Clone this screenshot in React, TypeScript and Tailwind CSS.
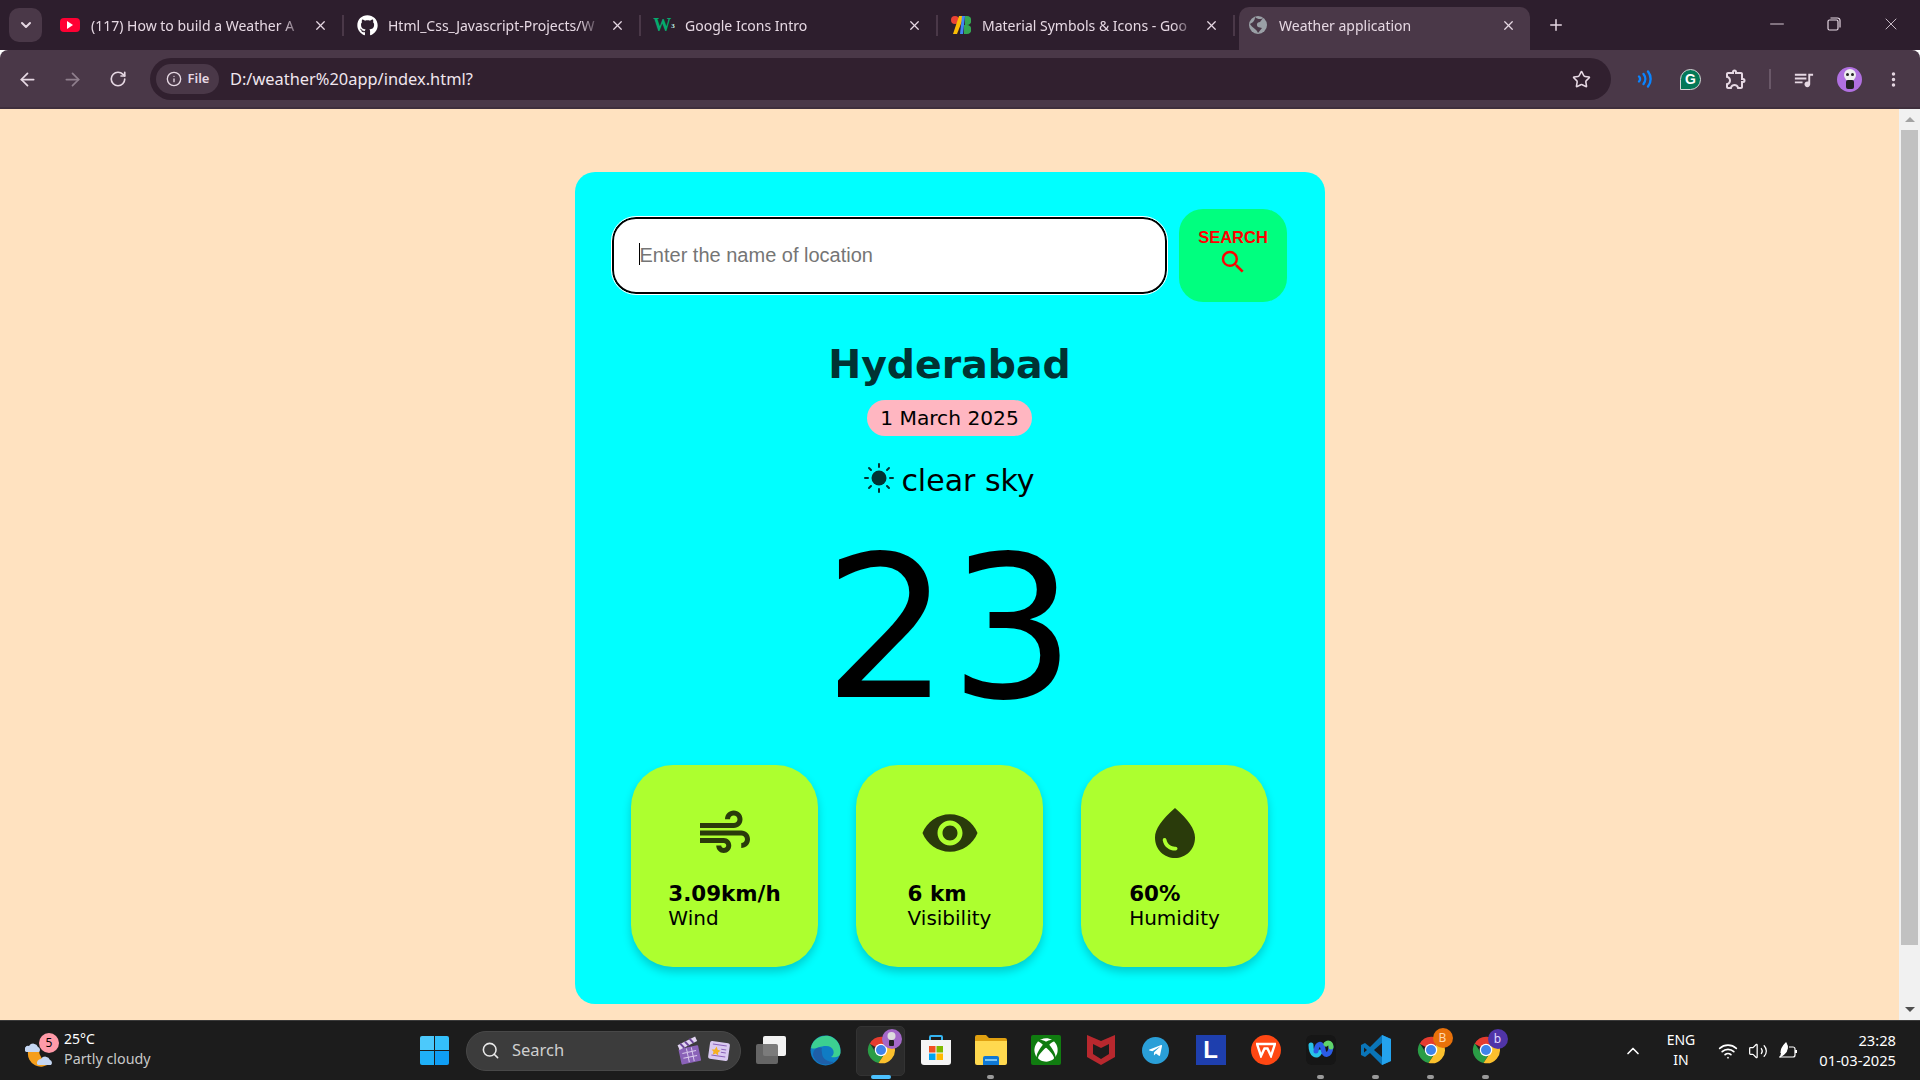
import React from "react";
import { ArrowLeft, ArrowRight, RotateCw, Info, Star, X, Plus, Minus, ChevronDown, ChevronUp, Search, Wifi, Volume2, EllipsisVertical } from "lucide-react";
import { MdAir, MdVisibility, MdWaterDrop, MdSearch, MdOutlineExtension, MdQueueMusic } from "react-icons/md";
import { FaGithub, FaXbox, FaTelegramPlane } from "react-icons/fa";

const uiFont = "font-['Noto_Sans',sans-serif]";

function ChromeLogo({ size = 30 }: { size?: number }) {
  return (
    <svg width={size} height={size} viewBox="0 0 48 48">
      <path d="M24 24 L6 14 A21 21 0 0 1 44 16 L24 16 Z" fill="#e53c2f" />
      <path d="M6 13 A21 21 0 0 0 20 44.6 L31 27 L24 32 L15 27 Z" fill="#2a9d46" />
      <path d="M44.5 16 A21 21 0 0 1 20 44.6 L31 28 L32 16 Z" fill="#fbc02d" />
      <circle cx="24" cy="24" r="10" fill="#fff" />
      <circle cx="24" cy="24" r="8" fill="#3f83ea" />
    </svg>
  );
}

function Tab({ icon, title, active }: { icon: React.ReactNode; title: string; active?: boolean }) {
  return (
    <div className="relative flex items-center w-[297px] h-[43px] shrink-0 pl-[15px] pb-[7px]">
      {active && <div className="absolute top-0 bottom-0 left-[4px] right-[2px] bg-[#4a3848] rounded-t-[10px]" />}
      <div className="relative w-[16px] h-[20px] flex items-center justify-center shrink-0">{icon}</div>
      <div className="relative ml-[13px] w-[213px] shrink-0 overflow-hidden whitespace-nowrap text-[14px] text-[#e6d8e3] [mask-image:linear-gradient(to_right,black_90%,transparent)]">{title}</div>
      <X size={15} strokeWidth={2} className="relative ml-[9px] shrink-0 text-[#e6d8e3]" />
      {!active && <div className="absolute right-0 top-[8px] h-[21px] w-[2px] bg-[#4a3848]" />}
    </div>
  );
}

function TbIcon({ children, dot, active }: { children: React.ReactNode; dot?: boolean; active?: boolean }) {
  return (
    <div className="relative w-[55px] h-[60px] shrink-0 flex items-center justify-center">
      {active && <div className="absolute left-[3px] right-[3px] top-[5px] bottom-[5px] bg-[#2b2b2b] rounded-[5px] border border-[#333333]" />}
      <div className="relative flex items-center justify-center -mt-[1px]">{children}</div>
      {dot && <div className="absolute bottom-[2px] left-[24px] w-[7px] h-[4px] rounded-full bg-[#9a9a9a]" />}
      {active && <div className="absolute bottom-[2px] left-[18px] w-[20px] h-[4px] rounded-full bg-[#4cc2ff]" />}
    </div>
  );
}

function Badge({ text, className }: { text: string; className: string }) {
  return <div className={`absolute -top-[6px] -right-[7px] w-[20px] h-[20px] rounded-full flex items-center justify-center text-[12px] ${className}`}>{text}</div>;
}

function Stat({ icon, value, label }: { icon: React.ReactNode; value: string; label: string }) {
  return (
    <div className="w-[187px] h-[202px] bg-[#adff2f] rounded-[42px] shadow-[0_5px_10px_rgba(0,0,0,0.2)] flex flex-col items-center pt-[38px]">
      <div className="h-[60px] text-[#2a3b0b]">{icon}</div>
      <div className="mt-[19px] text-left text-black font-['DejaVu_Sans',sans-serif]">
        <div className="font-bold text-[21.400px] leading-[24px]">{value}</div>
        <div className="text-[20px] leading-[24px]">{label}</div>
      </div>
    </div>
  );
}

export default function App() {
  return (
    <div className={`w-screen h-screen overflow-hidden flex flex-col ${uiFont}`}>
      {/* tab strip */}
      <div className="h-[50px] shrink-0 bg-[#2d1e2d] flex items-end relative">
        <div className="w-[47px] h-[50px] shrink-0 flex items-center justify-center pl-[4px]">
          <div className="w-[33px] h-[34px] rounded-[10px] bg-[#4a3848] flex items-center justify-center">
            <ChevronDown size={16} strokeWidth={3} className="text-[#e6d8e3]" />
          </div>
        </div>
        <Tab title="(117) How to build a Weather A" icon={<div className="w-[20px] h-[14px] shrink-0 bg-[#ff0033] rounded-[4px] flex items-center justify-center"><div className="w-0 h-0 border-y-[4px] border-y-transparent border-l-[6px] border-l-white" /></div>} />
        <Tab title="Html_Css_Javascript-Projects/W" icon={<FaGithub size={21} className="text-white shrink-0" />} />
        <Tab title="Google Icons Intro" icon={<span className="text-[#04aa6d] font-bold text-[18px] leading-none font-['Liberation_Serif',serif] whitespace-nowrap">W<sup className="text-[7px] text-[#cfe]">3</sup></span>} />
        <Tab title="Material Symbols & Icons - Goo" icon={
          <svg width="20" height="18" viewBox="0 0 20 18" className="shrink-0"><circle cx="4" cy="4" r="4" fill="#ea4335" /><path d="M8 0h5L6 18H2Z" fill="#fbbc04" /><path d="M11 0h3l-2 18H9Z" fill="#4285f4" /><path d="M14 0h2a4 4 0 0 1 0 9h-2Z" fill="#34a853" /><path d="M13 9h3a4.500 4.500 0 0 1 0 9h-3Z" fill="#34a853" /></svg>} />
        <Tab active title="Weather application" icon={
          <svg width="18" height="18" viewBox="0 0 18 18" className="shrink-0"><circle cx="9" cy="9" r="9" fill="#9aa0a6" /><path d="M6 1 C9 4 13 3 14 2 L11 6 C8 6 7 9 9 11 L13 12 L9 17 C8 13 3 12 1 8 C3 7 6 5 6 1Z" fill="#4a3848" /></svg>} />
        <div className="w-[43px] h-[43px] flex items-center justify-center pl-[5px] pb-[7px] shrink-0"><Plus size={18} strokeWidth={2} className="text-[#e6d8e3]" /></div>
        <div className="flex-1" />
        <div className="flex h-[50px] items-center pr-[18px] gap-[39px] text-[#e6d8e3] -translate-y-[1px]">
          <Minus size={22} strokeWidth={1} />
          <svg width="14" height="14" viewBox="0 0 14 14" fill="none" stroke="currentColor" strokeWidth="1.200"><rect x="1" y="3" width="10" height="10" rx="1.500" /><path d="M3.500 1h7a2.500 2.500 0 0 1 2.500 2.500v7" /></svg>
          <div className="w-[22px] flex justify-center"><X size={20} strokeWidth={1} /></div>
        </div>
      </div>

      {/* toolbar */}
      <div className="h-[59px] shrink-0 bg-[#4a3848] rounded-t-[8px] flex items-center border-b-[2px] border-b-[#3f2f3d] text-[#e6d8e3] pt-[1px]">
        <div className="w-[150px] shrink-0 flex items-center pl-[17px] gap-[24px]">
          <ArrowLeft size={21} strokeWidth={2} />
          <ArrowRight size={21} strokeWidth={2} className="text-[#8f7f8d]" />
          <RotateCw size={18} strokeWidth={2.200} className="ml-[2px]" />
        </div>
        <div className="w-[1461px] h-[42px] rounded-full bg-[#31202f] flex items-center pl-[6px] pr-[20px] shrink-0">
          <div className="w-[63px] h-[30px] rounded-full bg-[#4a3848] flex items-center justify-center gap-[6px]">
            <Info size={16} strokeWidth={2} />
            <span className="text-[13px] font-semibold">File</span>
          </div>
          <span className="ml-[11px] text-[16.400px] text-[#f0e6ee]">D:/weather%20app/index.html?</span>
          <div className="flex-1" />
          <Star size={19} strokeWidth={2} />
        </div>
        <div className="flex items-center flex-1">
          <svg width="20" height="22" viewBox="0 0 20 22" fill="none" stroke="#0a84ff" strokeWidth="2.400" strokeLinecap="round" className="ml-[24px]"><path d="M4 8.500a3.500 3.500 0 0 1 0 5" /><path d="M8.500 6a8 8 0 0 1 0 10" /><path d="M13 3.500a12 12 0 0 1 0 15" /></svg>
          <div className="ml-[25px] w-[21px] h-[21px] rounded-full rounded-bl-[2px] bg-[#047857] border border-[#d7d7d7] flex items-center justify-center text-white text-[14px] font-bold leading-none font-['Liberation_Sans',sans-serif]">G</div>
          <MdOutlineExtension size={24} className="ml-[23px]" />
          <div className="ml-[21px] w-[2px] h-[20px] bg-[#6a5868]" />
          <MdQueueMusic size={23} className="ml-[21px]" />
          <div className="ml-[22px] w-[25px] h-[25px] rounded-full bg-[#b070e0] flex items-center justify-center">
            <svg width="14" height="20" viewBox="0 0 14 20"><circle cx="7" cy="6" r="6" fill="#eee" /><circle cx="4.500" cy="5.500" r="1.500" fill="#222" /><circle cx="9.500" cy="5.500" r="1.500" fill="#222" /><rect x="3" y="11" width="8" height="9" rx="2" fill="#222" /></svg>
          </div>
          <EllipsisVertical size={19} strokeWidth={2.400} className="ml-[22px]" />
        </div>
      </div>

      {/* page */}
      <div className="flex-1 min-h-0 flex">
        <div className="flex-1 min-w-0 bg-[#ffe2c0] flex justify-center items-start pt-[63px] overflow-hidden">
          <div className="w-[750px] shrink-0 bg-[#00ffff] rounded-[20px] pt-[37px] pb-[37px] flex flex-col items-center">
            <div className="w-full pl-[37px] pr-[38px] flex items-center justify-between">
              <div className="relative w-[555px] h-[77px] shrink-0 rounded-[24px] border-[2.5px] border-black bg-white outline outline-1 outline-white flex items-center pl-[26px] pb-[1px] font-['Liberation_Sans',sans-serif]">
                <input className="w-full text-[20px] outline-none bg-transparent placeholder:text-[#757575]" placeholder="Enter the name of location" />
                <div className="absolute left-[25px] top-[24px] h-[22px] w-px bg-black" />
              </div>
              <div className="w-[108px] h-[93px] shrink-0 rounded-[24px] bg-[#00ff7f] flex flex-col items-center pt-[19px] text-[#ff0000] font-['Liberation_Sans',sans-serif]">
                <span className="text-[16.500px] font-bold leading-[19px] pl-[1px]">SEARCH</span>
                <MdSearch size={30} />
              </div>
            </div>
            <div className="font-['DejaVu_Sans',sans-serif] flex flex-col items-center w-full">
              <div className="mt-[38px] h-[48px] text-[39.400px] leading-[48px] font-bold text-[#003333]">Hyderabad</div>
              <div className="mt-[12px] h-[36px] px-[13px] rounded-full bg-[#ffb6c1] text-[20.200px] leading-[37px] text-black">1 March 2025</div>
              <div className="mt-[27px] h-[36px] flex items-center text-[30px] leading-[36px] text-black">
                <svg width="30" height="30" viewBox="0 0 30 30" className="mr-[7px] -mt-[6px]" stroke="#003333" strokeWidth="2" strokeLinecap="round">
                  <circle cx="15" cy="15" r="7.500" fill="#003333" stroke="none" />
                  <path d="M15 1v3M15 26v3M1 15h3M26 15h3M5 5l2 2M23 23l2 2M5 25l2-2M23 7l2-2" />
                </svg>
                clear sky
              </div>
              <div className="mt-[30px] h-[200px] text-[198px] leading-[200px] text-black">23</div>
              <div className="mt-[36px] flex justify-center gap-[38px] w-full">
                <Stat icon={<MdAir size={60} />} value="3.09km/h" label="Wind" />
                <Stat icon={<MdVisibility size={60} />} value="6 km" label="Visibility" />
                <Stat icon={<MdWaterDrop size={60} />} value="60%" label="Humidity" />
              </div>
            </div>
          </div>
        </div>
        <div className="w-[21px] shrink-0 bg-[#f1f1f1] flex flex-col items-center">
          <div className="h-[21px] flex items-center justify-center"><div className="w-0 h-0 border-x-[5px] border-x-transparent border-b-[5px] border-b-[#a3a3a3]" /></div>
          <div className="w-[17px] h-[815px] bg-[#c1c1c1]" />
          <div className="flex-1" />
          <div className="h-[21px] flex items-center justify-center"><div className="w-0 h-0 border-x-[5px] border-x-transparent border-t-[5px] border-t-[#505050]" /></div>
        </div>
      </div>

      {/* taskbar */}
      <div className="h-[60px] shrink-0 bg-[#1c1c1c] border-t border-t-[#3a3a3a] flex items-center relative">
        <div className="w-[420px] shrink-0 flex items-center pl-[25px]">
          <div className="relative w-[32px] h-[34px] shrink-0">
            <svg width="32" height="34" viewBox="0 0 32 34">
              <path d="M3 18 A13 13 0 0 0 25 29 A13 13 0 0 1 14 15 Z" fill="#f59e1b" />
              <path d="M0 17 a3.500 3.500 0 0 1 4-5 a5 5 0 0 1 9 1 a3 3 0 0 1 1 5 H2 a2 2 0 0 1-2-1Z" fill="#c4d6f2" />
              <path d="M12 30 a4 4 0 0 1 4-5 a5 5 0 0 1 9 1 a3 3 0 0 1 1 5 H14 a2 2 0 0 1-2-1Z" fill="#c4d6f2" />
            </svg>
            <div className="absolute -top-[1px] left-[14px] w-[20px] h-[20px] rounded-full bg-[#ff9aa8] flex items-center justify-center text-[12px] text-black">5</div>
          </div>
          <div className="ml-[7px] flex flex-col -mt-[3px]">
            <span className="text-[14px] leading-[20px] text-white">25°C</span>
            <span className="text-[14.300px] leading-[20px] text-[#c8c8c8]">Partly cloudy</span>
          </div>
        </div>
        <div className="w-[29px] shrink-0 grid grid-cols-2 gap-[1px]">
          <div className="h-[14px] bg-[#4cc9fb] rounded-tl-[2px]" /><div className="h-[14px] bg-[#34c0fb] rounded-tr-[2px]" />
          <div className="h-[14px] bg-[#1fb0f8] rounded-bl-[2px]" /><div className="h-[14px] bg-[#0f9ef5] rounded-br-[2px]" />
        </div>
        <div className="ml-[17px] w-[275px] h-[40px] shrink-0 rounded-full bg-[#3c3c3c] border border-[#484848] flex items-center pl-[14px] pr-[10px]">
          <Search size={19} strokeWidth={2} className="text-[#e8e8e8]" />
          <span className="ml-[12px] text-[16.500px] text-[#cfcfcf]">Search</span>
          <div className="flex-1" />
          <svg width="26" height="28" viewBox="0 0 26 28" className="rotate-[-12deg]"><rect x="3" y="10" width="20" height="16" rx="1" fill="#8a62b8" /><path d="M3 6 L22 1 L23 6 L4 11 Z" fill="#e2d5f2" /><path d="M6 5l3 5M11 4l3 5M16 2l3 5" stroke="#6d479b" strokeWidth="2" /><path d="M6 15h14M6 20h14M11 11v14M16 11v14" stroke="#d8c8ec" /></svg>
          <svg width="22" height="22" viewBox="0 0 22 22" className="ml-[6px] rotate-[8deg]"><rect x="1" y="2" width="20" height="18" rx="2" fill="#d9c9f0" /><path d="M4 5h14M13 9h5M13 12h5M4 16h14" stroke="#8a62b8" /><path d="M8 7l1.500 3 3 .5-2.200 2 .5 3-2.800-1.500-2.800 1.500.5-3-2.200-2 3-.5z" fill="#f5b021" /></svg>
        </div>
        <div className="w-[2px] shrink-0" />
        <TbIcon>
          <div className="relative w-[30px] h-[28px]">
            <div className="absolute left-[7px] top-0 w-[23px] h-[20px] bg-[#f2f2f2] rounded-[2px]" />
            <div className="absolute left-0 top-[8px] w-[22px] h-[20px] bg-[#6e6e6e]/90 rounded-[2px]" />
          </div>
        </TbIcon>
        <TbIcon>
          <svg width="31" height="31" viewBox="0 0 31 31">
            <circle cx="15.500" cy="15.500" r="15" fill="#0f7cc4" />
            <path d="M1 13 C3 2 14 0 19 1 C27 3 31 10 30.500 18 C30 22 25 23 21 22 C26 19 24 11 16 11 C9 11 5 15 1 13Z" fill="#3ccf91" />
            <path d="M12 18 C12 24 18 27 24 27 C19 31 6 31 3 20 C3 14 8 11 12 13 C11 15 12 16 12 18Z" fill="#1e5fa8" />
          </svg>
        </TbIcon>
        <TbIcon active>
          <div className="relative"><ChromeLogo /><div className="absolute -top-[6px] -right-[6px] w-[20px] h-[20px] rounded-full bg-[#a468c8] flex items-center justify-center"><svg width="9" height="14" viewBox="0 0 9 14"><circle cx="4.500" cy="4" r="4" fill="#ddd" /><rect x="2" y="8" width="5" height="6" rx="1" fill="#222" /></svg></div></div>
        </TbIcon>
        <TbIcon>
          <svg width="30" height="32" viewBox="0 0 30 32">
            <path d="M9 7V3a1 1 0 0 1 1-1h10a1 1 0 0 1 1 1v4" fill="none" stroke="#35b4f0" strokeWidth="2" />
            <path d="M0 6h30v22a3 3 0 0 1-3 3H3a3 3 0 0 1-3-3Z" fill="#f5f5f5" />
            <rect x="8" y="12" width="6.500" height="6.500" fill="#f25022" /><rect x="15.500" y="12" width="6.500" height="6.500" fill="#7fba00" /><rect x="8" y="19.500" width="6.500" height="6.500" fill="#00a4ef" /><rect x="15.500" y="19.500" width="6.500" height="6.500" fill="#ffb900" />
          </svg>
        </TbIcon>
        <TbIcon dot>
          <svg width="32" height="30" viewBox="0 0 32 30">
            <path d="M0 2a2 2 0 0 1 2-2h9l3 3h16a2 2 0 0 1 2 2v3H0Z" fill="#e0a010" />
            <path d="M0 6h32v22a2 2 0 0 1-2 2H2a2 2 0 0 1-2-2Z" fill="#ffd94f" />
            <path d="M8 23a2 2 0 0 1 2-2h12a2 2 0 0 1 2 2v7H8Z" fill="#0f78d4" />
            <rect x="10" y="24" width="12" height="2" fill="#7cc5f5" />
          </svg>
        </TbIcon>
        <TbIcon>
          <div className="w-[30px] h-[30px] rounded-[2px] bg-[#107c10] flex items-center justify-center"><FaXbox size={24} className="text-white" /></div>
        </TbIcon>
        <TbIcon>
          <svg width="28" height="30" viewBox="0 0 28 30"><path fillRule="evenodd" d="M0 0 L14 6 L28 0 V22 L14 30 L0 22 Z M6 9 V19 L14 24 L22 19 V9 L14 13 Z" fill="#b8282e" /></svg>
        </TbIcon>
        <TbIcon>
          <div className="w-[27px] h-[27px] rounded-full bg-[#2a9fd8] flex items-center justify-center"><FaTelegramPlane size={15} className="text-white -ml-[1px]" /></div>
        </TbIcon>
        <TbIcon>
          <div className="w-[30px] h-[30px] bg-[#1e3fae] flex items-center justify-center text-white text-[24px] font-bold leading-none font-['Liberation_Sans',sans-serif]">L</div>
        </TbIcon>
        <TbIcon>
          <div className="w-[30px] h-[30px] rounded-full bg-[#ff4713] flex items-center justify-center">
            <svg width="20" height="16" viewBox="0 0 20 16" fill="none" stroke="#fff" strokeWidth="2.400"><path d="M1 2h18l-4 12-3.500-7.500h-3L5 14Z" /></svg>
          </div>
        </TbIcon>
        <TbIcon dot>
          <div className="w-[30px] h-[30px] rounded-[6px] bg-[#161616] flex items-center justify-center">
            <svg width="26" height="20" viewBox="0 0 26 20" fill="none" strokeWidth="5" strokeLinecap="round"><path d="M3 5 C3 15 9 18 12 12" stroke="#27c4e8" /><path d="M8 11 C9 3 14 2 15 9 C16 17 22 16 23 7" stroke="#2b5ce6" /><path d="M18 4 C20 2 23 3 23 7" stroke="#5fd46a" /></svg>
          </div>
        </TbIcon>
        <TbIcon dot>
          <svg width="30" height="30" viewBox="0 0 30 30"><path d="M21 0 L30 4 V26 L21 30 L9 18 L4 22 L0 20 V10 L4 8 L9 12Z" fill="#0a75b8" /><path d="M21 0 L30 4 V26 L21 30 Z" fill="#24a3ee" /><path d="M21 8 L13 15 L21 22Z" fill="#1c1c1c" /><path d="M3 12.500V17.500L6 15Z" fill="#1c1c1c" /></svg>
        </TbIcon>
        <TbIcon dot>
          <div className="relative"><ChromeLogo /><Badge text="B" className="bg-[#e8710a] text-[#ffd9b0] -top-[7px]" /></div>
        </TbIcon>
        <TbIcon dot>
          <div className="relative"><ChromeLogo /><Badge text="b" className="bg-[#5034a8] text-[#e0d8ff]" /></div>
        </TbIcon>
        <div className="w-[130px] shrink-0 flex justify-end"><ChevronUp size={20} strokeWidth={2} className="text-white" /></div>
        <div className="ml-[19px] w-[38px] flex flex-col items-center text-[14px] leading-[20px] text-white -mt-[2px]">
          <span>ENG</span><span>IN</span>
        </div>
        <div className="ml-[18px] flex items-center gap-[10px] text-white">
          <Wifi size={20} strokeWidth={2} />
          <Volume2 size={20} strokeWidth={1.500} />
          <svg width="20" height="18" viewBox="0 0 20 18" fill="none" stroke="#fff" strokeWidth="1.200"><path d="M1 15 H15 a2 2 0 0 0 2-2 V7 a2 2 0 0 0-2-2 H11" /><path d="M18 8v3" strokeWidth="2" /><path d="M3 11 C3 6 6 3 8 1 C10 4 10 9 6 12 L2 15" fill="#fff" /></svg>
        </div>
        <div className="flex-1 flex flex-col items-end pr-[24px] text-[14.700px] leading-[20px] text-white -mt-[2px]">
          <span>23:28</span><span>01-03-2025</span>
        </div>
      </div>
    </div>
  );
}
